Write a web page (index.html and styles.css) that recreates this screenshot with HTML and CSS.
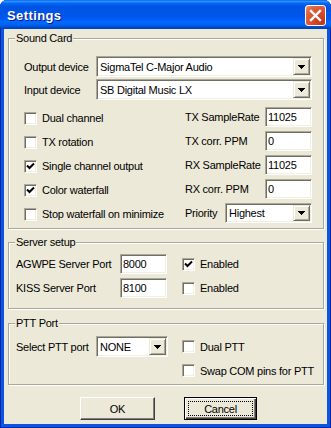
FILE: index.html
```html
<!DOCTYPE html>
<html>
<head>
<meta charset="utf-8">
<link rel="stylesheet" href="styles.css">
</head>
<body>
<div class="window">
  <div class="titlebar">
    <span class="title">Settings</span>
    <span class="close">
      <svg width="19" height="19" viewBox="0 0 19 19"><path d="M5 5 L14 14 M14 5 L5 14" stroke="#fff" stroke-width="2.4" stroke-linecap="square"/></svg>
    </span>
  </div>
  <div class="client">
    <div class="group sound">
      <span class="legend">Sound Card</span>
      <div class="device-row">
        <span class="dlabel">Output device</span>
        <div class="combo sunken device"><span class="val">SigmaTel C-Major Audio</span><span class="btn"><svg width="7" height="4" viewBox="0 0 7 4"><path d="M0 0h7v1h-1v1h-1v1h-1v1h-1v-1h-1v-1h-1v-1h-1z" fill="#000"/></svg></span></div>
      </div>
      <div class="device-row">
        <span class="dlabel">Input device</span>
        <div class="combo sunken device"><span class="val">SB Digital Music LX</span><span class="btn"><svg width="7" height="4" viewBox="0 0 7 4"><path d="M0 0h7v1h-1v1h-1v1h-1v1h-1v-1h-1v-1h-1v-1h-1z" fill="#000"/></svg></span></div>
      </div>
      <div class="options">
        <div class="checks">
          <div class="check"><span class="box"></span>Dual channel</div>
          <div class="check"><span class="box"></span>TX rotation</div>
          <div class="check"><span class="box"><svg width="9" height="9" viewBox="0 0 9 9"><path d="M1 3.5 L3.5 6 L8 1.5" stroke="#000" stroke-width="2" fill="none"/></svg></span>Single channel output</div>
          <div class="check"><span class="box"><svg width="9" height="9" viewBox="0 0 9 9"><path d="M1 3.5 L3.5 6 L8 1.5" stroke="#000" stroke-width="2" fill="none"/></svg></span>Color waterfall</div>
          <div class="check"><span class="box"></span>Stop waterfall on minimize</div>
        </div>
        <div class="rates">
          <div class="rate"><span>TX SampleRate</span><span class="field sunken">11025</span></div>
          <div class="rate"><span>TX corr. PPM</span><span class="field sunken">0</span></div>
          <div class="rate"><span>RX SampleRate</span><span class="field sunken">11025</span></div>
          <div class="rate"><span>RX corr. PPM</span><span class="field sunken">0</span></div>
          <div class="rate"><span>Priority</span><div class="combo sunken priority"><span class="val">Highest</span><span class="btn"><svg width="7" height="4" viewBox="0 0 7 4"><path d="M0 0h7v1h-1v1h-1v1h-1v1h-1v-1h-1v-1h-1v-1h-1z" fill="#000"/></svg></span></div></div>
        </div>
      </div>
    </div>

    <div class="group server">
      <span class="legend">Server setup</span>
      <div class="srow"><span class="slabel">AGWPE Server Port</span><span class="field sunken">8000</span><span class="check scheck"><span class="box"><svg width="9" height="9" viewBox="0 0 9 9"><path d="M1 3.5 L3.5 6 L8 1.5" stroke="#000" stroke-width="2" fill="none"/></svg></span>Enabled</span></div>
      <div class="srow"><span class="slabel">KISS Server Port</span><span class="field sunken">8100</span><span class="check scheck"><span class="box"></span>Enabled</span></div>
    </div>

    <div class="group ptt">
      <span class="legend">PTT Port</span>
      <div class="ptt-left">
        <span class="plabel">Select PTT port</span>
        <div class="combo sunken pcombo"><span class="val">NONE</span><span class="btn"><svg width="7" height="4" viewBox="0 0 7 4"><path d="M0 0h7v1h-1v1h-1v1h-1v1h-1v-1h-1v-1h-1v-1h-1z" fill="#000"/></svg></span></div>
      </div>
      <div class="ptt-right">
        <div class="check prow"><span class="box"></span>Dual PTT</div>
        <div class="check prow"><span class="box"></span>Swap COM pins for PTT</div>
      </div>
    </div>

    <div class="actions">
      <span class="button ok">OK</span>
      <span class="button cancel"><span class="focus">Cancel</span></span>
    </div>
  </div>
</div>
</body>
</html>
```
FILE: styles.css
```css
* { box-sizing: border-box; }
html, body { margin: 0; padding: 0; background: #fff; }
body {
  font-family: "Liberation Sans", Arial, sans-serif;
  font-size: 11px;
  letter-spacing: -0.25px;
  color: #000;
}
.window {
  width: 331px;
  height: 428px;
  display: flex;
  flex-direction: column;
  background: #0a56e0;
  border-radius: 7px 7px 0 0;
  overflow: hidden;
  box-shadow: inset 1px 0 #0025a8, inset -1px 0 #0025a8, inset 0 -1px #0025a8;
}
.titlebar {
  height: 29px;
  flex: none;
  display: flex;
  align-items: center;
  justify-content: space-between;
  padding: 1px 5px 0 7px;
  background: linear-gradient(to bottom, #0058ee 0%, #3593ff 4%, #288eff 6%, #127dff 8%, #036ffc 10%, #0262ee 14%, #0057e5 20%, #0054e3 24%, #0055eb 56%, #005bf5 66%, #026afe 76%, #0062ef 86%, #0052d6 92%, #0046c0 96%, #003fb0 100%);
}
.title {
  font-weight: bold;
  font-size: 13px;
  letter-spacing: 0.4px;
  color: #fff;
  text-shadow: 1px 1px #0a1883;
}
.close {
  width: 21px;
  height: 21px;
  border: 1px solid #fff;
  border-radius: 3px;
  display: flex;
  align-items: center;
  justify-content: center;
  background: radial-gradient(circle at 85% 85%, #c2351a 0%, #d9502e 50%, #e06a47 80%, #eea080 100%);
}
.client {
  flex: 1;
  margin: 0 4px 4px;
  background: #ece9d8;
  padding-top: 9px;
}
.group {
  position: relative;
  border: 1px solid #aca899;
  box-shadow: inset 1px 1px #fff, 1px 1px #fff;
  margin: 0 3px 0 4px;
}
.legend {
  position: absolute;
  top: -7px;
  left: 6px;
  padding: 0 1px;
  line-height: 13px;
  background: #ece9d8;
}
.sunken {
  background: #fff;
  border: 1px solid;
  border-color: #aca899 #fff #fff #aca899;
  box-shadow: inset 1px 1px #716f64, inset -1px -1px #f1efe2;
}
.sound { padding: 17px 11px 4px 15px; }
.device-row { display: flex; align-items: center; height: 21px; }
.device-row + .device-row { margin-top: 2px; }
.dlabel { width: 72px; }
.combo { display: flex; align-items: center; }
.device { flex: 1; height: 21px; }
.combo .val { flex: 1; padding-left: 3px; white-space: nowrap; }
.combo .btn {
  align-self: stretch;
  width: 17px;
  margin: 1px;
  background: #ece9d8;
  border: 1px solid;
  border-color: #ece9d8 #716f64 #716f64 #ece9d8;
  box-shadow: inset 1px 1px #fff, inset -1px -1px #aca899;
  display: flex;
  align-items: center;
  justify-content: center;
}
.options { display: flex; margin-top: 7px; }
.checks { width: 161px; display: flex; flex-direction: column; gap: 4px; margin-top: 1px; }
.rates { flex: 1; display: flex; flex-direction: column; gap: 4px; }
.check { height: 20px; display: flex; align-items: center; white-space: nowrap; }
.box {
  width: 13px;
  height: 13px;
  flex: none;
  margin-right: 5px;
  background: #fff;
  border: 1px solid;
  border-color: #aca899 #fff #fff #aca899;
  box-shadow: inset 1px 1px #716f64, inset -1px -1px #f1efe2;
  display: flex;
  align-items: center;
  justify-content: center;
}
.rate { height: 20px; display: flex; align-items: center; justify-content: space-between; }
.field { width: 47px; height: 20px; padding: 1px 0 0 2px; line-height: 16px; }
.priority { width: 87px; height: 20px; }
.server { margin-top: 13px; padding: 11px 0 10px 7px; }
.srow { display: flex; align-items: center; height: 20px; }
.srow + .srow { margin-top: 4px; }
.slabel { width: 104px; }
.scheck { margin-left: 15px; }
.ptt { margin-top: 14px; padding: 12px 0 3px 7px; display: flex; align-items: flex-start; }
.ptt-left { display: flex; align-items: center; height: 21px; }
.plabel { width: 80px; }
.pcombo { width: 72px; height: 21px; }
.ptt-right { margin-left: 14px; display: flex; flex-direction: column; gap: 3px; }
.prow { height: 21px; }
.actions { margin-top: 12px; display: flex; padding-left: 76px; gap: 29px; }
.button {
  height: 23px;
  display: flex;
  align-items: center;
  justify-content: center;
  background: #ece9d8;
  border: 1px solid;
  border-color: #fff #404040 #404040 #fff;
  box-shadow: inset -1px -1px #808080;
}
.ok { width: 75px; }
.cancel {
  width: 73px;
  border: 1px solid #000;
  box-shadow: inset 1px 1px #fff, inset -1px -1px #404040, inset -2px -2px #808080;
  padding: 3px;
}
.focus {
  flex: 1;
  align-self: stretch;
  display: flex;
  align-items: center;
  justify-content: center;
  border: 1px dotted #000;
}
```
